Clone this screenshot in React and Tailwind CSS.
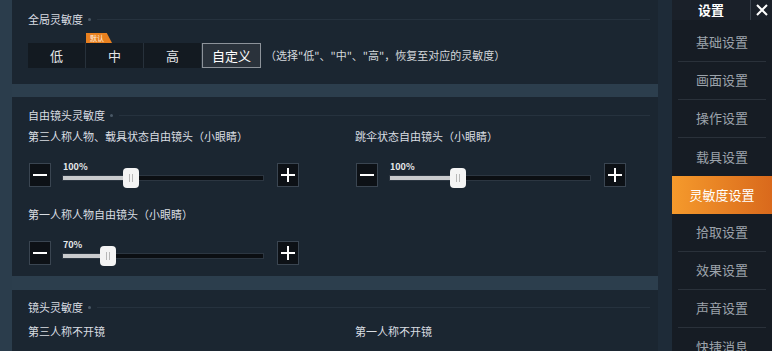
import React from 'react'

const font = { fontFamily: '"Noto Sans CJK SC", "Noto Sans", sans-serif' }

const menu = ['基础设置', '画面设置', '操作设置', '载具设置', '灵敏度设置', '拾取设置', '效果设置', '声音设置', '快捷消息']

const SectionTitle = ({ children }) => (
    <div className="flex items-center h-[16px] text-[11px] text-[#d9dde2]">
        <span>{children}</span>
        <span className="ml-[5px] w-[3px] h-[3px] rounded-full bg-[#4a5866]" />
        <span className="ml-[6px] flex-1 h-px bg-[#26323e]" />
    </div>
)

const StepButton = ({ plus }) => (
    <div className="w-[22px] h-[24px] bg-[#0d1116] border border-[#3a4551] flex items-center justify-center">
        <div className="relative w-[14px] h-[14px] flex items-center justify-center">
            <span className="absolute w-[14px] h-[2px] bg-white" />
            {plus && <span className="absolute w-[2px] h-[14px] bg-white" />}
        </div>
    </div>
)

const Slider = ({ value, pos }) => (
    <div className="flex items-center h-[27px]">
        <StepButton />
        <div className="relative ml-[11px] w-[202px] h-[27px]">
            <div className="absolute left-[1px] top-[0px] text-[9px] font-bold text-[#e6e8ea] leading-[12px]">{value}</div>
            <div className="absolute left-0 top-[14px] w-[202px] h-[6px] bg-[#0b0e12] border border-[#2c3641]">
                <div className="h-full bg-[#c9cbcd]" style={{ width: pos + '%' }} />
            </div>
            <div
                className="absolute top-[7px] w-[16px] h-[20px] -ml-[8px] rounded-[4px] bg-[#f4f4f4] flex items-center justify-center gap-[2px]"
                style={{ left: pos + '%' }}
            >
                <span className="w-px h-[8px] bg-[#b8b8b8]" />
                <span className="w-px h-[8px] bg-[#b8b8b8]" />
            </div>
        </div>
        <div className="ml-[13px]">
            <StepButton plus />
        </div>
    </div>
)

const App = () => {
    return (
        <div className="w-[772px] h-[351px] overflow-hidden flex bg-[#22313f]" style={font}>
            <div className="w-[12px] bg-[#2b3d4c]" />

            <div className="w-[646px] flex flex-col">
                <div className="h-[84px] bg-[#1b2631] pl-[16px] pr-[8px] pt-[11px]">
                    <SectionTitle>全局灵敏度</SectionTitle>
                    <div className="mt-[16px] flex items-center">
                        <div className="flex h-[25px] bg-[#131a21]">
                            {['低', '中', '高'].map((t, i) => (
                                <div key={t} className="relative w-[58px] h-full flex items-center justify-center text-[13px] text-[#e4e6e8] border-r border-[#27313b]">
                                    {t}
                                    {i === 1 && (
                                        <div className="absolute left-0 -top-[10px] h-[10px] px-[4px] bg-[#e8801f] text-[7px] leading-[10px] text-[#fff3e0] [clip-path:polygon(0_0,80%_0,100%_100%,0_100%)] pr-[8px]">
                                            默认
                                        </div>
                                    )}
                                </div>
                            ))}
                            <div className="w-[59px] h-full flex items-center justify-center text-[13px] text-white bg-[#2a323b] border border-[#8d939a]">
                                自定义
                            </div>
                        </div>
                        <div className="ml-[4px] text-[11px] text-[#d4d8dc]">（选择"低"、"中"、"高"，恢复至对应的灵敏度）</div>
                    </div>
                </div>

                <div className="h-[13px] bg-[#2c3e4d]" />

                <div className="h-[179px] bg-[#1b2631] pl-[16px] pr-[8px] pt-[10px]">
                    <SectionTitle>自由镜头灵敏度</SectionTitle>
                    <div className="grid grid-cols-[327px_1fr]">
                        <div>
                            <div className="mt-[5px] h-[16px] text-[11px] text-[#d9dde2] leading-[16px]">第三人称人物、载具状态自由镜头（小眼睛）</div>
                            <div className="mt-[17px] ml-[1px]">
                                <Slider value="100%" pos={34} />
                            </div>
                            <div className="mt-[18px] h-[16px] text-[11px] text-[#d9dde2] leading-[16px]">第一人称人物自由镜头（小眼睛）</div>
                            <div className="mt-[17px] ml-[1px]">
                                <Slider value="70%" pos={23} />
                            </div>
                        </div>
                        <div>
                            <div className="mt-[5px] h-[16px] text-[11px] text-[#d9dde2] leading-[16px]">跳伞状态自由镜头（小眼睛）</div>
                            <div className="mt-[17px] ml-[1px]">
                                <Slider value="100%" pos={34} />
                            </div>
                        </div>
                    </div>
                </div>

                <div className="h-[14px] bg-[#2c3e4d]" />

                <div className="flex-1 bg-[#1b2631] pl-[16px] pr-[8px] pt-[9px]">
                    <SectionTitle>镜头灵敏度</SectionTitle>
                    <div className="grid grid-cols-[327px_1fr] mt-[8px] text-[11px] text-[#d9dde2]">
                        <div>第三人称不开镜</div>
                        <div>第一人称不开镜</div>
                    </div>
                </div>
            </div>

            <div className="w-[14px] bg-[#1e2b38]" />

            <div className="w-[100px] flex flex-col bg-[#161c24]">
                <div className="h-[22px] flex bg-[#1a2029]">
                    <div className="w-[78px] flex items-center justify-center text-[13px] font-bold text-white">设置</div>
                    <div className="flex-1 flex items-center justify-center border-l border-[#3a424c] text-white">
                        <svg width="14" height="14" viewBox="0 0 14 14">
                            <path d="M2 2 L12 12 M12 2 L2 12" stroke="#fff" strokeWidth="2" />
                        </svg>
                    </div>
                </div>
                <div className="flex flex-col pt-[4px]">
                    {menu.map((m, i) => (
                        i === 4 ? (
                            <div key={m} className="h-[38px] flex items-center justify-center text-[13px] text-white bg-gradient-to-r from-[#f59a2c] to-[#d9691c]">
                                {m}
                            </div>
                        ) : (
                            <div key={m} className={'h-[38px] flex items-center justify-center text-[13px] text-[#9ca3ab] mx-[6px] ' + (i !== 3 && i !== 8 ? 'border-b border-[#2a313a]' : '')}>
                                {m}
                            </div>
                        )
                    ))}
                </div>
            </div>
        </div>
    )
}

export default App
